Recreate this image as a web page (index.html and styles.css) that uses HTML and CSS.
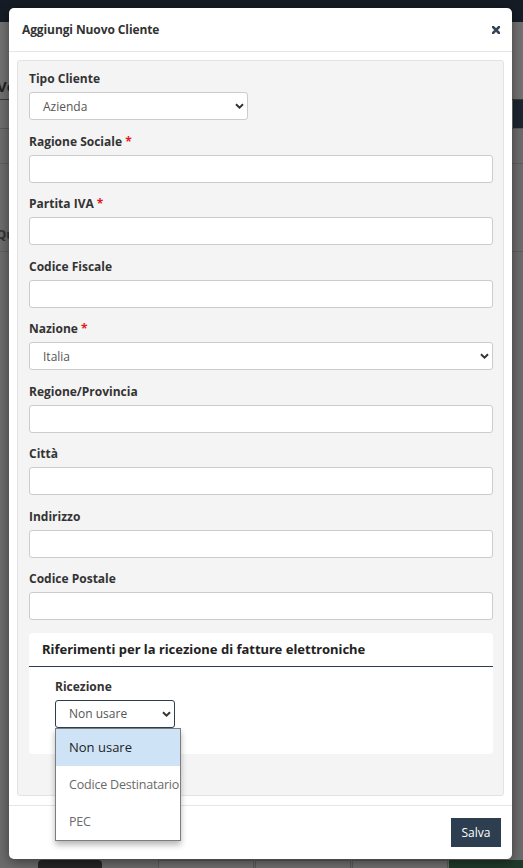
FILE: index.html
```html
<!DOCTYPE html>
<html lang="it">
<head>
<meta charset="utf-8">
<title>Aggiungi Nuovo Cliente</title>
<link rel="stylesheet" href="styles.css">
</head>
<body>
<div class="page">
  <div class="topbar"></div>
  <div class="page-head"><span class="page-title">Vendite</span></div>
  <div class="page-tools">
    <div class="page-search">Cerca</div>
    <div class="page-btn"></div>
  </div>
  <div class="page-row"></div>
  <div class="page-row tall"><span class="page-q">Quantità</span></div>
  <div class="page-fill"></div>
  <div class="page-foot">
    <div class="foot-dark"></div>
    <div class="foot-box"></div>
    <div class="foot-box"></div>
    <div class="foot-box"></div>
    <div class="foot-green"></div>
  </div>
</div>

<div class="backdrop">
  <div class="modal">
    <div class="modal-header">
      <h4 class="modal-title">Aggiungi Nuovo Cliente</h4>
      <button class="close" type="button" aria-label="Chiudi">
        <svg width="8" height="8" viewBox="0 0 8 8"><path d="M1 1L7 7M7 1L1 7" stroke="#34465a" stroke-width="2.6" stroke-linecap="square"/></svg>
      </button>
    </div>
    <div class="modal-body">
      <div class="panel">
        <div class="group">
          <label class="label">Tipo Cliente</label>
          <div class="select short"><span>Azienda</span></div>
        </div>
        <div class="group">
          <label class="label">Ragione Sociale <span class="req">*</span></label>
          <div class="input"></div>
        </div>
        <div class="group">
          <label class="label">Partita IVA <span class="req">*</span></label>
          <div class="input"></div>
        </div>
        <div class="group">
          <label class="label">Codice Fiscale</label>
          <div class="input"></div>
        </div>
        <div class="group">
          <label class="label">Nazione <span class="req">*</span></label>
          <div class="select"><span>Italia</span></div>
        </div>
        <div class="group">
          <label class="label">Regione/Provincia</label>
          <div class="input"></div>
        </div>
        <div class="group">
          <label class="label">Città</label>
          <div class="input"></div>
        </div>
        <div class="group">
          <label class="label">Indirizzo</label>
          <div class="input"></div>
        </div>
        <div class="group">
          <label class="label">Codice Postale</label>
          <div class="input"></div>
        </div>

        <div class="card">
          <div class="card-head">Riferimenti per la ricezione di fatture elettroniche</div>
          <div class="card-body">
            <label class="label">Ricezione</label>
            <div class="dd">
              <div class="select focus"><span>Non usare</span></div>
              <ul class="menu">
                <li class="opt active">Non usare</li>
                <li class="opt">Codice Destinatario</li>
                <li class="opt">PEC</li>
              </ul>
            </div>
          </div>
        </div>
      </div>
    </div>
    <div class="modal-footer">
      <button class="btn" type="button">Salva</button>
    </div>
  </div>
</div>
</body>
</html>
```

FILE: styles.css
```css
html, body {
  margin: 0;
  padding: 0;
  height: 100%;
}
body {
  width: 523px;
  height: 868px;
  overflow: hidden;
  font-family: "Open Sans", "Liberation Sans", sans-serif;
  background: #6f6f6f;
  position: relative;
}

/* background page (dimmed) */
.page {
  display: flex;
  flex-direction: column;
  height: 868px;
}
.topbar {
  height: 22px;
  background: #151c25;
  flex: none;
}
.page-head {
  height: 78px;
  display: flex;
  align-items: flex-end;
  padding: 0 0 3px 0;
  box-sizing: border-box;
  border-bottom: 1px solid #3a3a3a;
  background: #727272;
}
.page-title {
  font-size: 15px;
  font-weight: 700;
  color: #222;
  margin-left: -3px;
  line-height: 20px;
}
.page-tools {
  height: 28px;
  display: flex;
  justify-content: space-between;
  background: #6e6e6e;
  border-bottom: 1px solid #5a5a5a;
}
.page-search {
  font-size: 12px;
  color: #4a4a4a;
  line-height: 28px;
  padding-left: 12px;
}
.page-btn {
  width: 10px;
  background: #1c2530;
}
.page-row {
  height: 34px;
  border-bottom: 1px solid #5e5e5e;
  background: #6c6c6c;
}
.page-row.tall {
  height: 88px;
  box-sizing: border-box;
  display: flex;
  align-items: flex-end;
  padding-bottom: 8px;
}
.page-q {
  font-size: 13px;
  font-weight: 700;
  color: #333;
  margin-left: -4px;
  line-height: 18px;
}
.page-fill {
  flex: 1;
  background: #6c6c6c;
}
.page-foot {
  height: 8px;
  display: flex;
  gap: 1px;
  background: #6c6c6c;
}
.foot-dark {
  width: 64px;
  margin-left: 38px;
  margin-right: 55px;
  background: #262626;
  border-radius: 4px 4px 0 0;
}
.foot-box {
  width: 94px;
  border: 1px solid #5a5a5a;
  border-bottom: 0;
  background: #707070;
}
.foot-green {
  flex: 1;
  background: #1f3a2a;
}

/* modal overlay */
.backdrop {
  position: absolute;
  inset: 0;
  padding: 8px 11px 9px 9px;
  box-sizing: border-box;
  display: flex;
}
.modal {
  flex: 1;
  background: #fff;
  border-radius: 5px;
  box-shadow: 0 3px 12px rgba(0, 0, 0, 0.45);
  display: flex;
  flex-direction: column;
}
.modal-header {
  height: 43px;
  border-bottom: 1px solid #e5e5e5;
  display: flex;
  align-items: center;
  justify-content: space-between;
  padding: 0 12px 0 13px;
  flex: none;
}
.modal-title {
  margin: 0;
  font-size: 12px;
  font-weight: 700;
  color: #333;
  line-height: 18px;
  letter-spacing: -0.1px;
}
.close {
  border: 0;
  background: none;
  padding: 0;
  width: 8px;
  height: 8px;
  display: flex;
  margin-top: 1px;
}

.modal-body {
  flex: 1;
  display: flex;
  padding: 8px 8px 9px;
}
.panel {
  flex: 1;
  background: #f4f4f4;
  border: 1px solid #e3e3e3;
  border-radius: 3px;
  padding: 9px 10px 0 11px;
}

.group {
  margin-bottom: 12.5px;
}
.label {
  display: block;
  font-size: 12px;
  font-weight: 700;
  color: #333;
  line-height: 18px;
  margin-bottom: 4px;
}
.req {
  color: #e41a1a;
}
.input,
.select {
  height: 28px;
  box-sizing: border-box;
  background: #fff;
  border: 1px solid #cccccc;
  border-radius: 3px;
}
.select {
  display: flex;
  align-items: center;
  padding-left: 13px;
  font-size: 12px;
  color: #555;
  background-image: url("data:image/svg+xml;utf8,<svg xmlns='http://www.w3.org/2000/svg' width='9' height='6' viewBox='0 0 9 6'><path d='M1 1.2L4.5 4.6L8 1.2' fill='none' stroke='%23333' stroke-width='2'/></svg>");
  background-repeat: no-repeat;
  background-position: right 3px center;
}
.select.short {
  width: 219px;
}
.select.focus {
  border-color: #2c3e50;
  width: 120px;
}

.card {
  background: #fff;
  border-radius: 4px;
  margin-top: 0.5px;
}
.card-head {
  font-family: "Noto Sans", "Open Sans", sans-serif;
  font-size: 13px;
  font-weight: 700;
  color: #222;
  line-height: 17px;
  padding: 8px 13px;
  border-bottom: 1px solid #2c3e50;
}
.card-body {
  padding: 11px 26px 26px;
}
.dd {
  position: relative;
}
.menu {
  position: absolute;
  left: 0;
  top: 28px;
  width: 126px;
  margin: 0;
  padding: 0;
  list-style: none;
  background: #fff;
  border: 1px solid #7d7d7d;
  box-sizing: border-box;
  box-shadow: 0 4px 6px rgba(0, 0, 0, 0.28);
  overflow: hidden;
  z-index: 2;
}
.opt {
  height: 37px;
  line-height: 37px;
  padding-left: 13px;
  font-size: 12.5px;
  letter-spacing: -0.2px;
  color: #6a6a6a;
  white-space: nowrap;
}
.opt.active {
  background: #cfe3f7;
  color: #222;
  letter-spacing: 0;
  font-size: 13px;
}

.modal-footer {
  flex: none;
  border-top: 1px solid #e5e5e5;
  display: flex;
  justify-content: flex-end;
  padding: 12px 11px 12px;
}
.btn {
  height: 29px;
  width: 50px;
  border: 0;
  border-radius: 0;
  background: #2c3e50;
  color: #fff;
  font-family: "Open Sans", "Liberation Sans", sans-serif;
  font-size: 12px;
  padding: 0;
}
```
